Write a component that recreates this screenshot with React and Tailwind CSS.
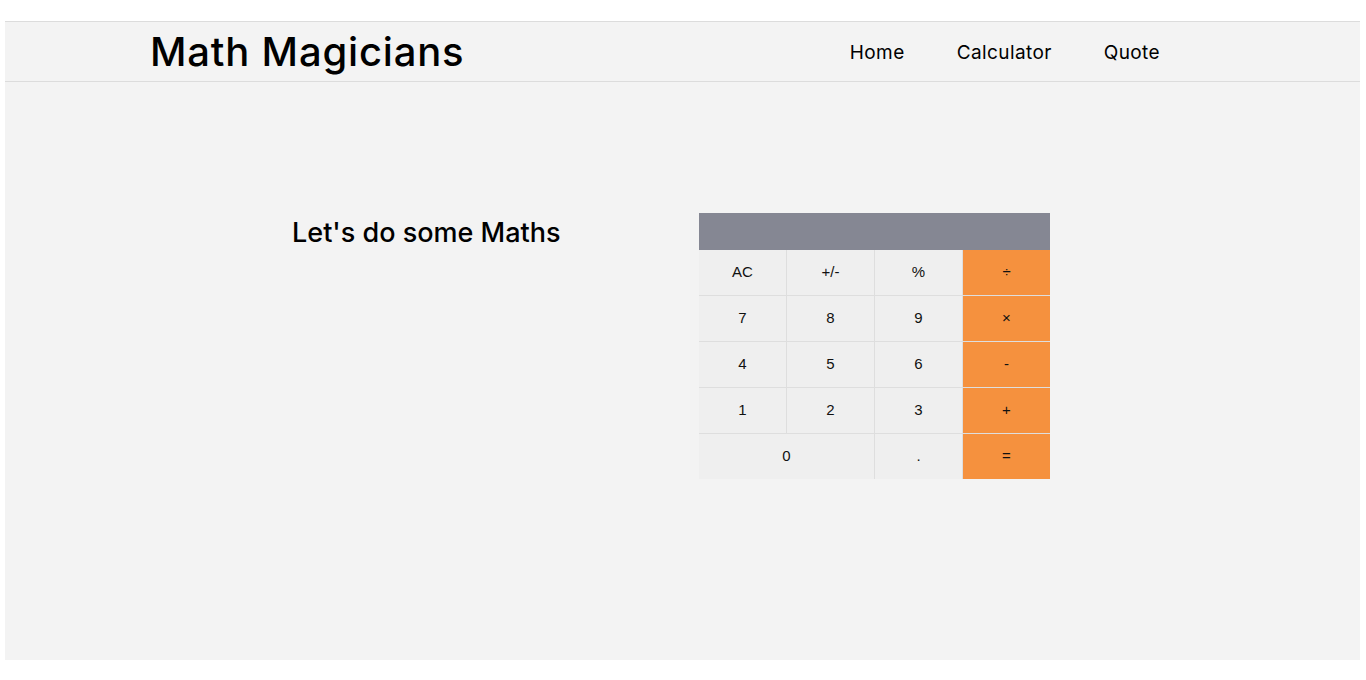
import React from 'react';

const keys = [
  { label: 'AC' }, { label: '+/-' }, { label: '%' }, { label: '÷', op: true },
  { label: '7' }, { label: '8' }, { label: '9' }, { label: '×', op: true },
  { label: '4' }, { label: '5' }, { label: '6' }, { label: '-', op: true },
  { label: '1' }, { label: '2' }, { label: '3' }, { label: '+', op: true },
  { label: '0', wide: true }, { label: '.' }, { label: '=', op: true },
];

const Calculator = () => (
  <div className="w-[351px] font-['Liberation_Sans',Arial,sans-serif] text-[15px] text-[#111]">
    <div className="h-[37px] bg-[#858793]" />
    <div className="grid grid-cols-4 auto-rows-[45px] gap-px bg-[#dedede]">
      {keys.map((k) => (
        <button
          key={k.label}
          className={
            (k.wide ? 'col-span-2 ' : '') +
            (k.op ? 'bg-[#f5913e] ' : 'bg-[#efefef] ') +
            'flex items-center justify-center'
          }
        >
          {k.label}
        </button>
      ))}
    </div>
  </div>
);

export default function App() {
  return (
    <div className="min-h-screen bg-white pt-[21px] pl-[5px]">
      <div className="w-[1355px] h-[639px] bg-[#f3f3f3] font-['Inter','Noto_Sans',sans-serif] text-black">
        {/* Header */}
        <header className="h-[61px] border-y border-[#dcdcdc] flex items-center justify-between pl-[145px] pr-[200px]">
          <h1 className="text-[40px] font-medium tracking-[0.8px] leading-none">Math Magicians</h1>
          <nav className="flex gap-[52px] text-[19px] tracking-[0.4px] mt-[3px]">
            <a href="#">Home</a>
            <a href="#">Calculator</a>
            <a href="#">Quote</a>
          </nav>
        </header>

        {/* Main */}
        <main className="flex items-start pt-[131px] pl-[287px]">
          <h2 className="w-[407px] text-[27px] font-medium leading-[40px]">Let's do some Maths</h2>
          <Calculator />
        </main>
      </div>
    </div>
  );
}
